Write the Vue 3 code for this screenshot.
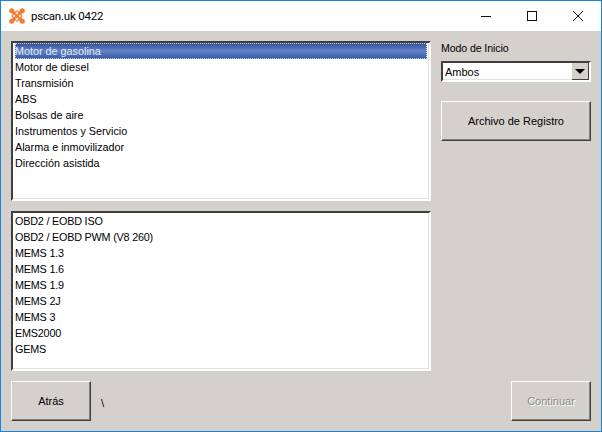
<script setup>
const engines = ['Motor de gasolina','Motor de diesel','Transmisión','ABS','Bolsas de aire','Instrumentos y Servicio','Alarma e inmovilizador','Dirección asistida']
const ecus = ['OBD2 / EOBD ISO','OBD2 / EOBD PWM (V8 260)','MEMS 1.3','MEMS 1.6','MEMS 1.9','MEMS 2J','MEMS 3','EMS2000','GEMS']
</script>

<template>
  <div class="window">
    <header class="titlebar">
      <svg class="logo" width="16" height="16" viewBox="0 0 16 16">
        <path d="M3 3L13 13M13 3L3 13" stroke="#f47b30" stroke-width="3.6" fill="none"/>
        <path d="M8 2L14 8L8 14L2 8Z" fill="#f47b30"/>
        <g fill="#f47b30">
          <circle cx="2.7" cy="2.7" r="2.5"/><circle cx="13.3" cy="2.7" r="2.5"/>
          <circle cx="2.7" cy="13.3" r="2.5"/><circle cx="13.3" cy="13.3" r="2.5"/>
        </g>
        <g fill="#fde9db">
          <circle cx="8" cy="5" r="1.3"/><circle cx="8" cy="11" r="1.3"/>
          <circle cx="5" cy="8" r="1.3"/><circle cx="11" cy="8" r="1.3"/>
        </g>
      </svg>
      <span class="title">pscan.uk 0422</span>
      <div class="controls">
        <span class="ctl"><svg width="12" height="12" viewBox="0 0 12 12"><path d="M1 6.5H11" stroke="#111" fill="none"/></svg></span>
        <span class="ctl"><svg width="12" height="12" viewBox="0 0 12 12"><rect x="1.5" y="1.5" width="9" height="9" stroke="#111" fill="none"/></svg></span>
        <span class="ctl"><svg width="12" height="12" viewBox="0 0 12 12"><path d="M1 1L11 11M11 1L1 11" stroke="#111" fill="none"/></svg></span>
      </div>
    </header>
    <main class="client">
      <div class="top">
        <div class="lists">
          <ul class="list">
            <li v-for="(e, i) in engines" :key="e" :class="{ selected: i === 0 }">{{ e }}</li>
          </ul>
          <ul class="list caps">
            <li v-for="e in ecus" :key="e">{{ e }}</li>
          </ul>
        </div>
        <aside class="side">
          <label class="label">Modo de Inicio</label>
          <div class="select">
            <span class="value">Ambos</span>
            <span class="arrow"><i></i></span>
          </div>
          <button class="btn wide">Archivo de Registro</button>
        </aside>
      </div>
      <footer class="bottom">
        <button class="btn">Atrás</button>
        <span class="path">\</span>
        <button class="btn disabled">Continuar</button>
      </footer>
    </main>
  </div>
</template>

<style>
html, body { margin: 0; padding: 0; background: #d4d1cc; overflow: hidden; }
</style>

<style scoped>
.window {
  width: 602px; height: 432px; box-sizing: border-box;
  border: 1px solid #1883d7;
  display: flex; flex-direction: column;
  font: 11px/16px "Liberation Sans", Arial, sans-serif; color: #000;
  background: #d4d1cc;
}
.titlebar {
  height: 30px; background: #fff; display: flex; align-items: center; flex: none;
  padding-left: 8px;
}
.logo { flex: none; }
.title { margin-left: 6px; font: 11.5px Roboto, "Noto Sans", sans-serif; letter-spacing: -0.2px; color: #000; }
.controls { margin-left: auto; display: flex; }
.ctl { width: 46px; height: 30px; display: flex; align-items: center; justify-content: center; }
.client { flex: 1; display: flex; flex-direction: column; padding: 10px; }
.top { display: flex; gap: 10px; flex: 1; }
.lists { display: flex; flex-direction: column; gap: 10px; width: 420px; }
.list {
  margin: 0; padding: 0 2px 1px; list-style: none; height: 160px; box-sizing: border-box;
  background: #fff;
  border: 2px solid; border-color: #404040 #fff #fff #404040;
  box-shadow: inset -1px -1px 0 #e4e2de;
  font-size: 10.8px;
}
.caps { letter-spacing: -0.2px; }
.list li { height: 16px; line-height: 16px; white-space: nowrap; }
.list li.selected {
  background: linear-gradient(#2f4f96, #6482c8 50%, #34579f);
  color: #e6ebfa; outline: 1px dotted #c8d4f0; outline-offset: -1px;
}
.side { width: 150px; display: flex; flex-direction: column; }
.label { height: 20px; line-height: 14px; color: #000; font-size: 10.6px; letter-spacing: -0.1px; }
.select {
  height: 21px; box-sizing: border-box; display: flex; background: #fff;
  border: 2px solid; border-color: #404040 #fff #fff #404040;
  box-shadow: inset 0 -1px 0 #e4e2de;
}
.value { flex: 1; padding-left: 2px; line-height: 19px; }
.arrow {
  width: 17px; height: 17px; background: #d4d1cc;
  border-right: 1px solid #404040; border-bottom: 1px solid #404040;
  box-sizing: border-box; display: flex; align-items: center; justify-content: center;
}
.arrow i { width: 0; height: 0; border: 5px solid transparent; border-top: 5px solid #000; border-bottom: 0; }
.btn {
  width: 80px; height: 40px; box-sizing: border-box; padding: 0; background: #d4d1cc;
  border: 1px solid; border-color: #fff #404040 #404040 #fff;
  box-shadow: inset -1px -1px 0 #808080;
  font: 11px "Liberation Sans", Arial, sans-serif; color: #000;
}
.wide { width: 150px; margin-top: 19px; }
.disabled { color: #8a8a8a; text-shadow: 1px 1px 0 #fff; }
.bottom { display: flex; align-items: center; flex: none; }
.path { margin-left: 10px; margin-top: 4px; }
.bottom .disabled { margin-left: auto; }
</style>
